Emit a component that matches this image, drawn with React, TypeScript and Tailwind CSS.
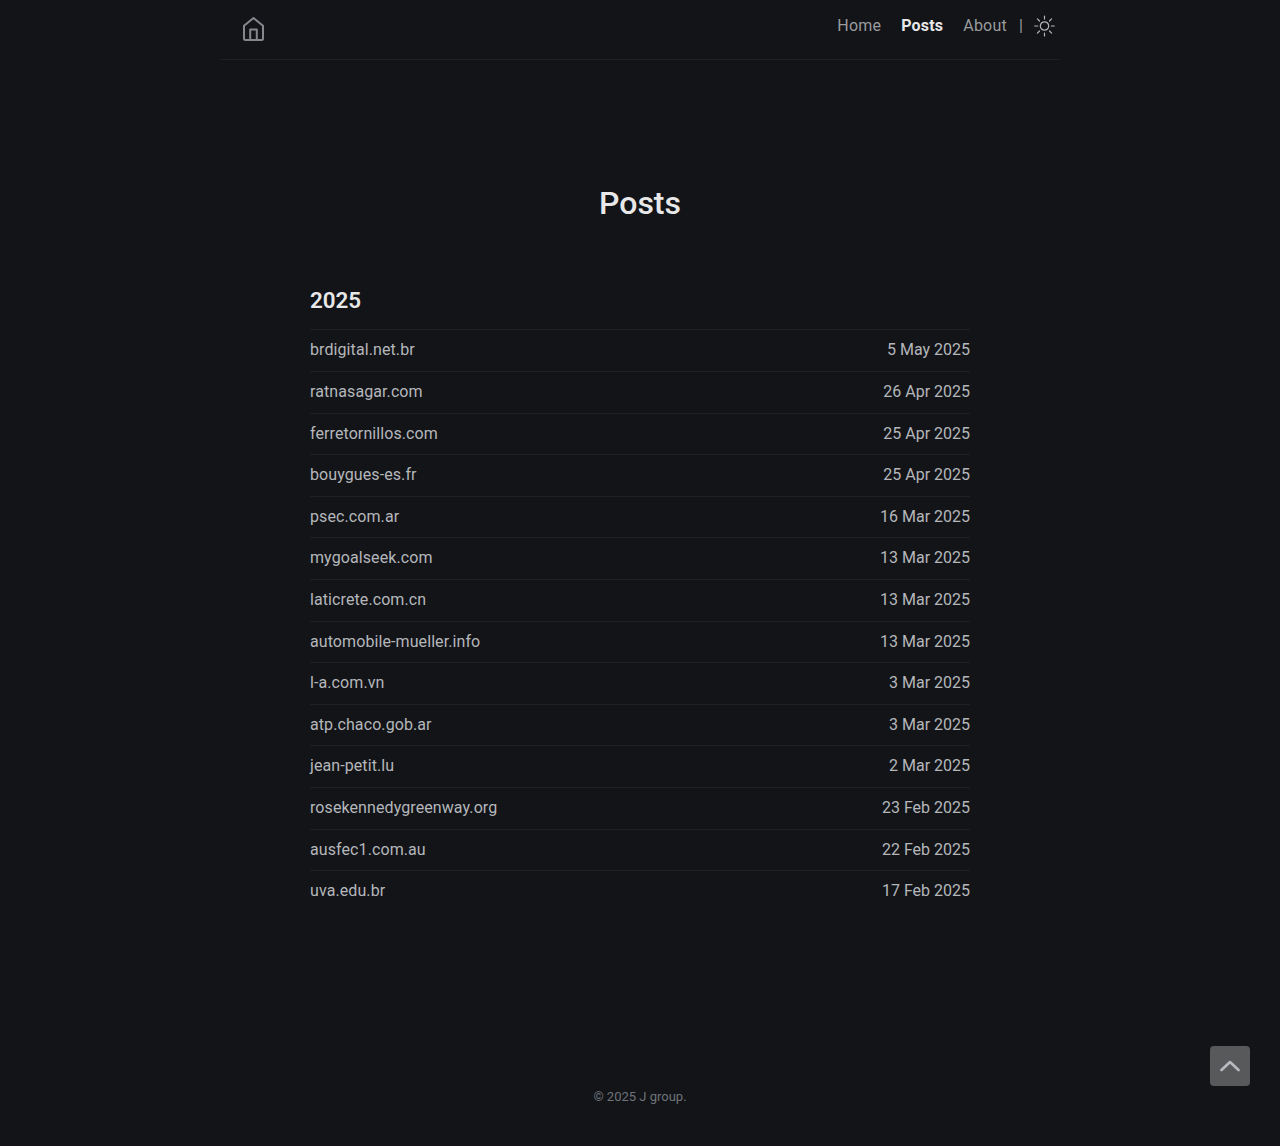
const POSTS = [
  { title: 'brdigital.net.br', date: '5 May 2025' },
  { title: 'ratnasagar.com', date: '26 Apr 2025' },
  { title: 'ferretornillos.com', date: '25 Apr 2025' },
  { title: 'bouygues-es.fr', date: '25 Apr 2025' },
  { title: 'psec.com.ar', date: '16 Mar 2025' },
  { title: 'mygoalseek.com', date: '13 Mar 2025' },
  { title: 'laticrete.com.cn', date: '13 Mar 2025' },
  { title: 'automobile-mueller.info', date: '13 Mar 2025' },
  { title: 'l-a.com.vn', date: '3 Mar 2025' },
  { title: 'atp.chaco.gob.ar', date: '3 Mar 2025' },
  { title: 'jean-petit.lu', date: '2 Mar 2025' },
  { title: 'rosekennedygreenway.org', date: '23 Feb 2025' },
  { title: 'ausfec1.com.au', date: '22 Feb 2025' },
  { title: 'uva.edu.br', date: '17 Feb 2025' },
];

function HomeIcon() {
  return (
    <svg width="21" height="24" viewBox="0 0 21 24" fill="none" stroke="#85878c" strokeWidth="2" strokeLinejoin="round">
      <path d="M1 8.800 10.500 1 20 8.800v12.700a1.500 1.500 0 0 1-1.500 1.500h-16A1.500 1.500 0 0 1 1 21.500Z" />
      <path d="M7.200 23V12.500h6.600V23" />
    </svg>
  );
}

function SunIcon() {
  return (
    <svg width="21" height="22" viewBox="0 0 21 22" fill="none" stroke="#b4b5b8" strokeWidth="1.200" strokeLinecap="round">
      <circle cx="10.500" cy="11" r="4.200" />
      <path d="M10.500 1v3M10.500 18v3M.7 11h3M17.300 11h3M3.400 3.900 5.500 6M15.500 16l2.100 2.100M3.400 18.100 5.500 16M15.500 6l2.100-2.100" />
    </svg>
  );
}

export default function App() {
  return (
    <div className="relative h-[1146px] bg-[#121418] font-['Roboto',sans-serif] text-[#b5b7bb]">
      <header className="mx-auto flex h-[60px] w-[840px] items-start justify-between border-b border-[#1e2024] pr-[5px] pl-[23px]">
        <a className="mt-[17px] block">
          <HomeIcon />
        </a>
        <nav className="mt-[14px] flex items-center text-base leading-[24px] tracking-[0.2px]">
          <a className="mr-5 text-[#9a9b9e]">Home</a>
          <a className="mr-5 font-bold text-[#e8e8e9]">Posts</a>
          <a className="mr-3 text-[#9a9b9e]">About</a>
          <span className="mr-[11px] text-[#9a9b9e]">|</span>
          <SunIcon />
        </nav>
      </header>

      <main className="mx-auto w-[660px]">
        <h1 className="mt-[121px] text-center text-[32px] leading-[44px] font-medium text-[#e8e8e9]">Posts</h1>
        <h2 className="mt-[57px] text-[22.4px] leading-[36px] font-semibold text-[#e8e8e9]">2025</h2>
        <ul className="mt-[11.4px]">
          {POSTS.map((post) => (
            <li
              key={post.title}
              className="flex h-[41.6px] items-center justify-between border-t border-[#1e2024] pb-[0.5px] text-base"
            >
              <a className="tracking-[0.09px]">{post.title}</a>
              <span>{post.date}</span>
            </li>
          ))}
        </ul>
      </main>

      <footer className="absolute top-[1087px] w-full text-center text-[13px] leading-[20px] text-[#6f7378]">
        © 2025 J group.
      </footer>

      <button
        type="button"
        className="absolute top-[1046px] left-[1210px] flex h-10 w-10 items-center justify-center rounded-[4px] bg-[#58595b]"
      >
        <svg width="20" height="12" viewBox="0 0 20 12" fill="none" stroke="#b9bac0" strokeWidth="2.600" strokeLinecap="round" strokeLinejoin="round">
          <path d="M1.500 10 10 2l8.500 8" />
        </svg>
      </button>
    </div>
  );
}
